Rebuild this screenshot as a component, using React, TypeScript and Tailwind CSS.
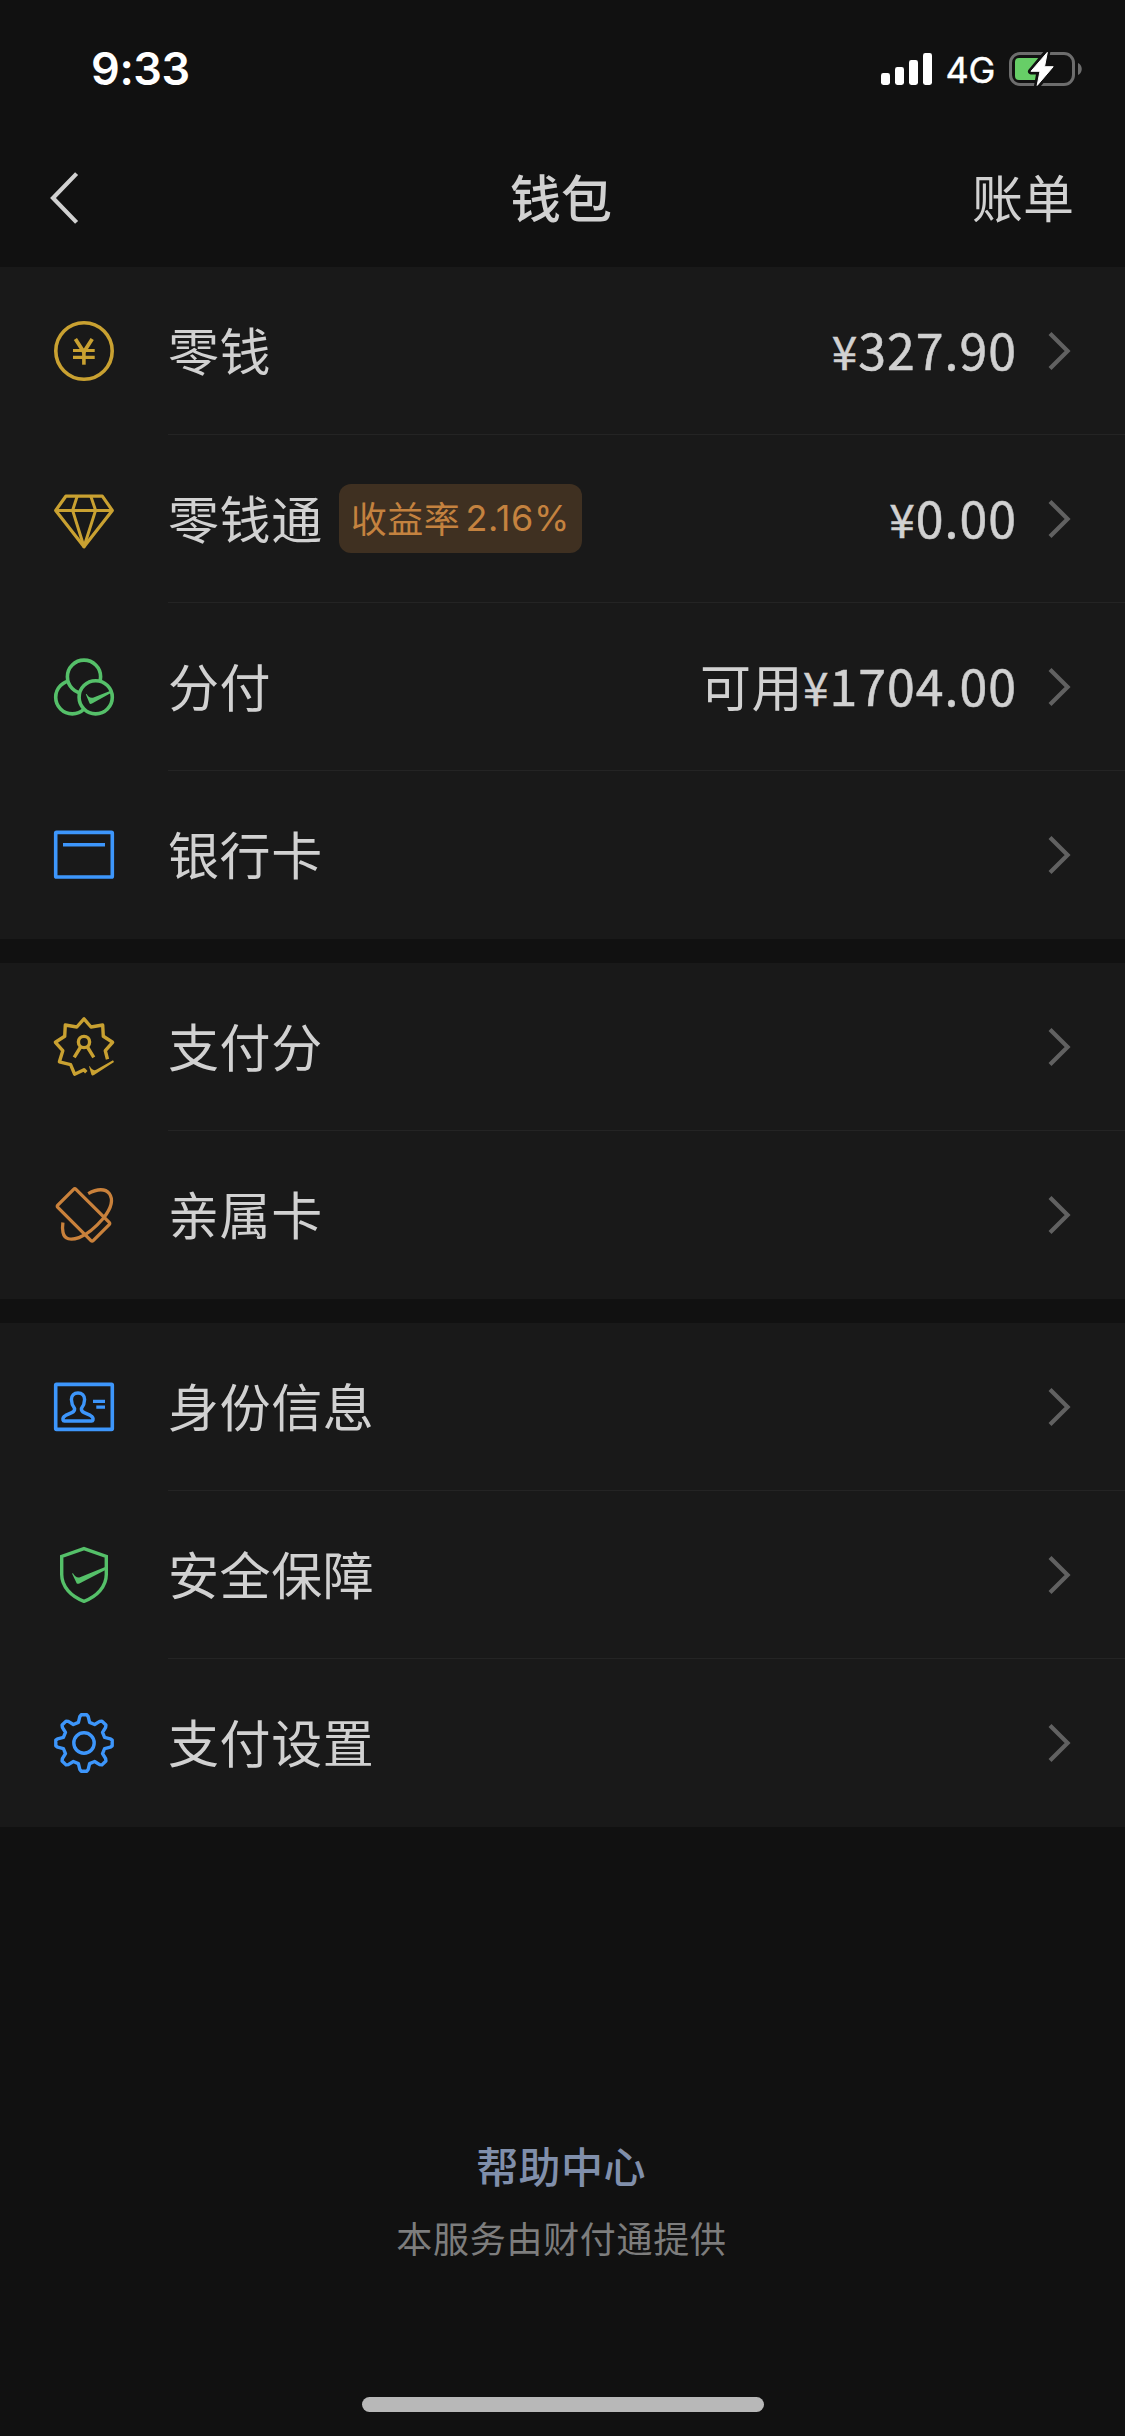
import type { ReactNode } from "react";

const GOLD = "#c9a131";
const GREEN = "#55c069";
const BLUE = "#3d96fb";
const ORANGE = "#c9813b";

function Icon({ color, children }: { color: string; children: ReactNode }) {
  return (
    <svg
      viewBox="0 0 72 72"
      className="size-[72px] shrink-0"
      fill="none"
      stroke={color}
      strokeWidth={3.6}
      strokeLinejoin="round"
    >
      {children}
    </svg>
  );
}

function CoinIcon() {
  return (
    <Icon color={GOLD}>
      <circle cx="36" cy="36" r="28.2" />
      <path d="M27.4 24L35.8 37L44.2 24" strokeLinejoin="miter" strokeWidth={3.8} />
      <path d="M25 35.5H46.7M25 42.3H46.7" strokeWidth={3.2} />
      <path d="M35.9 35.5V49.7" strokeWidth={3.6} />
    </Icon>
  );
}

function DiamondIcon() {
  return (
    <Icon color={GOLD}>
      <path d="M17.8 13.2H54.3L64.3 27.4L36 63.8L7.7 27.4Z" strokeWidth={3.2} />
      <path d="M7.7 27.4H64.3M29.2 13.2L24.6 27.4L36 63.8L47.6 27.4L42.8 13.2" strokeWidth={3} />
    </Icon>
  );
}

function CirclesIcon() {
  return (
    <Icon color={GREEN}>
      <circle cx="24.3" cy="46.3" r="16.6" />
      <circle cx="36" cy="25.7" r="16.6" fill="#191919" />
      <circle cx="47.7" cy="46.3" r="16.6" fill="#191919" />
      <path
        d="M37.8 43.2L38.6 43C40.2 45.6 42 47.5 45.6 46.6L63.2 39.6L63.8 41.4L44 52.6C42.6 53.4 41.8 53.2 41.3 51.8Z"
        fill={GREEN}
        stroke="none"
      />
    </Icon>
  );
}

function BankCardIcon() {
  return (
    <Icon color={BLUE}>
      <rect x="7.7" y="13.4" width="56.6" height="44.6" rx="0.8" />
      <path d="M15 25.7H57" />
    </Icon>
  );
}

function ScoreIcon() {
  return (
    <Icon color={GOLD}>
      <path
        d="M59.5 48.2L57.3 39.7L64.6 31.3L55.3 25.3L54.7 14L43 16L36 7.8L28.8 16L17.3 14L16.7 25.3L7.4 31.3L14.8 39.7L11.4 50.8L22.6 53.6L26.6 63.2L36 58.8L38.3 61.2"
        strokeWidth={3.4}
      />
      <circle cx="36" cy="31" r="5.6" strokeWidth={3.4} />
      <path d="M32.6 36L26.2 46.4M39.4 36L45.8 46.4" strokeWidth={3.4} />
      <path
        d="M41 55L42 55.6C43.6 58.6 45.6 60 48.6 58.6L65 49.2L66 51L46.4 63.8C44.6 65 43.6 64.6 43.2 63Z"
        fill={GOLD}
        stroke="none"
      />
    </Icon>
  );
}

function FamilyCardIcon() {
  return (
    <Icon color={ORANGE}>
      <path
        d="M25.6 10.4L9.8 26.2Q8.7 27.3 9.8 28.4L43 61.6Q44.1 62.7 45.2 61.6L61.2 45.6Q62.3 44.5 61.2 43.4L28 10.4Q26.8 9.2 25.6 10.4Z"
        strokeWidth={3.3}
      />
      <path
        d="M40.2 14.6C49.5 9.4 57.5 9.6 61.2 14.4C66 21 62.4 30.4 55.4 39.2C47 49 39 55.6 31 58.6C22.6 61.6 16.4 60.4 15 53.4C14.4 50.2 14.4 47 14.9 43.6"
        strokeWidth={3.3}
      />
    </Icon>
  );
}

function IdIcon() {
  return (
    <Icon color={BLUE}>
      <rect x="7.7" y="13.4" width="56.6" height="45" rx="0.8" />
      <path
        d="M26.6 37.6C24.4 34.6 23.4 31.6 23.4 28.6C23.4 24.4 26 22 30 22C34 22 36.6 24.4 36.6 28.6C36.6 31.6 35.6 34.6 33.4 37.6C33.2 39.4 34 40.6 36.2 41.6L42.4 44.4C44.6 45.6 45.4 47.2 45 49C44.8 49.8 44.4 50 43.6 50H16.4C15.6 50 15.2 49.8 15 49C14.6 47.2 15.4 45.6 17.6 44.4L23.8 41.6C26 40.6 26.8 39.4 26.6 37.6Z"
        strokeWidth={3.4}
      />
      <path d="M45 30.3H57M48.3 36.2H57" strokeWidth={3.3} />
    </Icon>
  );
}

function ShieldIcon() {
  return (
    <Icon color={GREEN}>
      <path d="M36 9.6L58.3 17.4V35.6C58.3 47.6 49 57.4 36 62.3C23 57.4 13.7 47.6 13.7 35.6V17.4Z" strokeLinejoin="miter" strokeWidth={3.4} />
      <path
        d="M24 34.6L25 34.2C26.6 37 29 39.2 32 38.2L58.4 27.4V30.6L31.4 44.4C29.8 45.2 28.8 45 28.3 43.4Z"
        fill={GREEN}
        stroke="none"
      />
    </Icon>
  );
}

function gearPath() {
  const points: string[] = [];
  for (let tooth = 0; tooth < 8; tooth++) {
    const angle = (tooth * Math.PI) / 4;
    const profile = [
      [-5.6, -20.6],
      [-4.2, -26.4],
      [-2.8, -28.2],
      [2.8, -28.2],
      [4.2, -26.4],
      [5.6, -20.6],
    ];
    for (const [x, y] of profile) {
      const px = 36 + x * Math.cos(angle) - y * Math.sin(angle);
      const py = 36 + x * Math.sin(angle) + y * Math.cos(angle);
      points.push(`${px.toFixed(2)} ${py.toFixed(2)}`);
    }
  }
  return `M${points.join("L")}Z`;
}

function GearIcon() {
  return (
    <Icon color={BLUE}>
      <path d={gearPath()} strokeWidth={3.4} />
      <circle cx="36" cy="36" r="10.2" strokeWidth={3.4} />
    </Icon>
  );
}

type Row = { icon: ReactNode; label: string; badge?: ReactNode; prefix?: string; amount?: string };

const groups: Row[][] = [
  [
    { icon: <CoinIcon />, label: "零钱", amount: "327.90" },
    {
      icon: <DiamondIcon />,
      label: "零钱通",
      amount: "0.00",
      badge: (
        <>
          <span className="tracking-[0.6px]">收益率</span>
          <span className="ml-[5px] pt-0.5 font-['Inter'] tracking-[0.6px]">2.16%</span>
        </>
      ),
    },
    { icon: <CirclesIcon />, label: "分付", prefix: "可用", amount: "1704.00" },
    { icon: <BankCardIcon />, label: "银行卡" },
  ],
  [
    { icon: <ScoreIcon />, label: "支付分" },
    { icon: <FamilyCardIcon />, label: "亲属卡" },
  ],
  [
    { icon: <IdIcon />, label: "身份信息" },
    { icon: <ShieldIcon />, label: "安全保障" },
    { icon: <GearIcon />, label: "支付设置" },
  ],
];

function RowView({ row, last }: { row: Row; last: boolean }) {
  return (
    <div className="flex h-[168px] items-center pl-12">
      {row.icon}
      <div
        className={`ml-12 flex h-full flex-1 items-center border-b pr-[54px] ${last ? "border-transparent" : "border-[#242424]"}`}
      >
        <span className="pb-[3px] text-[51px] leading-none tracking-[0.6px]">{row.label}</span>
        {row.badge && (
          <span className="ml-4 flex h-[69px] w-[243px] items-center justify-center whitespace-nowrap rounded-xl bg-[#3f3021] pb-[3px] text-[36px] leading-none text-[#c4823f]">
            {row.badge}
          </span>
        )}
        <span className="ml-auto flex items-center pb-[3px] text-[51px] leading-none">
          {row.prefix && <span className="tracking-[0.5px]">{row.prefix}</span>}
          {row.amount && (
            <span className="pb-[3px] text-[50px] tracking-[1px] [-webkit-text-stroke:0.5px_#d1d1d1]">
              <span className="text-[46px]">¥</span>
              {row.amount}
            </span>
          )}
        </span>
        <svg
          viewBox="0 0 24 42"
          className="ml-[30px] h-[42px] w-6 shrink-0"
          fill="none"
          stroke="#616161"
          strokeWidth="4.2"
        >
          <path d="M3 3.4L20.6 21L3 38.6" />
        </svg>
      </div>
    </div>
  );
}

function StatusBar() {
  return (
    <div className="flex h-[132px] items-start justify-between pl-[91px] pr-[42px] pt-[45px] font-['Inter'] text-white">
      <span className="text-[45px] font-semibold leading-[48px] tracking-[-0.4px]">9:33</span>
      <div className="flex h-12 items-center">
        <svg viewBox="0 0 52 34" className="h-[34px] w-[52px]" fill="#fff">
          <rect x="0" y="21" width="9" height="12" rx="2.4" />
          <rect x="14" y="15" width="9" height="18" rx="2.4" />
          <rect x="28" y="8" width="9" height="25" rx="2.4" />
          <rect x="42" y="1" width="9" height="32" rx="2.4" />
        </svg>
        <span className="ml-3 pt-0.5 text-[36px] leading-none tracking-[-0.3px] [-webkit-text-stroke:0.4px_#fff]">4G</span>
        <svg viewBox="0 0 74 38" className="ml-[14px] h-[38px] w-[74px]" fill="none">
          <rect x="1.5" y="3.5" width="63" height="31" rx="9.5" stroke="#6d6d6d" strokeWidth="3" />
          <path d="M69 13C74 15 74 23 69 25Z" fill="#6d6d6d" />
          <rect x="6" y="8" width="26" height="22" rx="4" fill="#67ce67" />
          <path
            d="M38.3 2L22 21.5H30.5L28 36L44.5 16.5H35.5Z"
            stroke="#111111"
            strokeWidth="6"
            strokeLinejoin="round"
          />
          <path
            d="M38.3 2.4L22 21.3H31L28.2 35.4L44.2 16.7H35.5Z"
            fill="#fff"
            stroke="#fff"
            strokeWidth="1"
            strokeLinejoin="round"
          />
        </svg>
      </div>
    </div>
  );
}

export default function App() {
  return (
    <div className="flex h-[2436px] w-[1125px] flex-col bg-[#111111] font-['Noto_Sans_CJK_SC',sans-serif] text-[#d1d1d1]">
      <StatusBar />
      <header className="grid h-[135px] grid-cols-3 items-center pb-[3px] pl-[48px] pr-[51px] text-[51px] leading-none">
        <svg viewBox="0 0 32 54" className="h-[54px] w-8" fill="none" stroke="#d1d1d1" strokeWidth="4.2">
          <path d="M28.6 2.6L5 27L28.6 51.4" />
        </svg>
        <h1 className="pb-[3px] text-center font-medium">钱包</h1>
        <span className="pb-[3px] text-right">账单</span>
      </header>
      <main className="flex flex-col gap-6">
        {groups.map((rows, i) => (
          <section key={i} className="bg-[#191919]">
            {rows.map((row, j) => (
              <RowView key={row.label} row={row} last={j === rows.length - 1} />
            ))}
          </section>
        ))}
      </main>
      <footer className="mt-auto flex flex-col items-center pb-6">
        <a className="mr-[3px] text-[42px] font-medium leading-none tracking-[0.4px] text-[#808fab]">帮助中心</a>
        <p className="mr-0.5 mt-[33px] text-[36px] leading-none tracking-[0.7px] text-[#7d7d7d]">本服务由财付通提供</p>
        <div className="mt-[142px] h-[15px] w-[402px] rounded-full bg-[#b8b8b8]" />
      </footer>
    </div>
  );
}
